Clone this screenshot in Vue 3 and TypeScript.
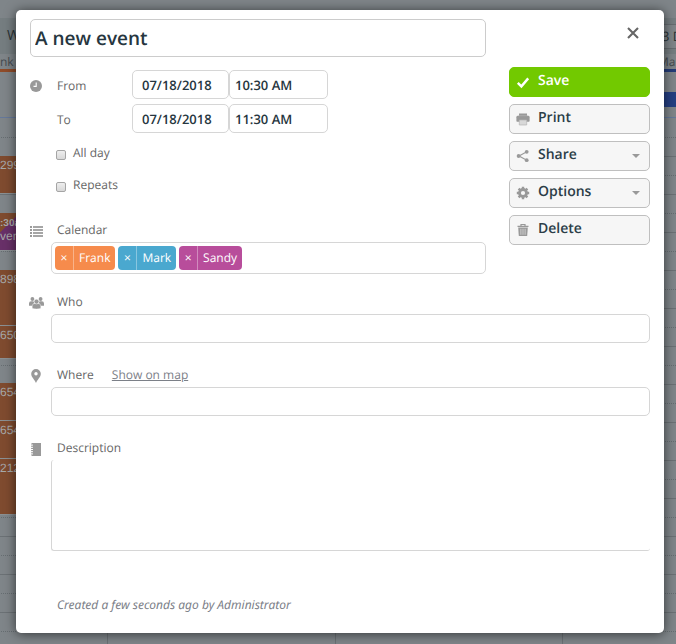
<script setup lang="ts">
import { ref } from 'vue'

interface Tag {
  name: string
  tone: string
}

const title = ref('A new event')
const from = ref({ date: '07/18/2018', time: '10:30 AM' })
const to = ref({ date: '07/18/2018', time: '11:30 AM' })
const allDay = ref(false)
const repeats = ref(false)
const tags = ref<Tag[]>([
  { name: 'Frank', tone: 'orange' },
  { name: 'Mark', tone: 'blue' },
  { name: 'Sandy', tone: 'purple' },
])
const calendarQuery = ref('')
const who = ref('')
const where = ref('')
const description = ref('')

function removeTag(name: string) {
  tags.value = tags.value.filter((tag) => tag.name !== name)
}
</script>

<template>
  <div class="page">
    <div class="calendar" aria-hidden="true">
      <div class="cal-top"></div>
      <div class="cal-toolbar">
        <span class="cal-view">W</span>
        <span class="cal-range">3 D</span>
      </div>
      <div class="cal-names">
        <span>nk</span>
        <span class="name-end">Mar</span>
      </div>
      <div class="cal-bars"><i></i><i class="bar-end"></i></div>
      <div class="cal-allday"><i></i></div>
      <div class="cal-grid">
        <div class="day">
          <div class="slot free"></div>
          <div class="slot event">299</div>
          <div class="slot gap"></div>
          <div class="slot mixed"><b>:30a</b><br />vent</div>
          <div class="slot gap"></div>
          <div class="slot event tall">898</div>
          <div class="slot event short">650</div>
          <div class="slot gap wide"></div>
          <div class="slot event">654</div>
          <div class="slot event">654</div>
          <div class="slot event tall">212</div>
        </div>
        <div class="day"></div>
        <div class="day"></div>
        <div class="day last"></div>
      </div>
    </div>

    <form class="dialog" role="dialog" aria-label="Event" @submit.prevent>
      <div class="upper">
        <div class="main">
          <input v-model="title" class="box title" type="text" aria-label="Title" />

          <div class="times">
            <svg class="icon clock" viewBox="0 0 12 12">
              <circle cx="6" cy="6" r="6" fill="#999" />
              <path d="M6.2 2.5V6.4H3.5" fill="none" stroke="#fff" stroke-width="1.1" />
            </svg>
            <label for="from-date">From</label>
            <div class="pair">
              <input id="from-date" v-model="from.date" class="box date" type="text" />
              <input v-model="from.time" class="box time" type="text" aria-label="From time" />
            </div>
            <label class="second" for="to-date">To</label>
            <div class="pair">
              <input id="to-date" v-model="to.date" class="box date" type="text" />
              <input v-model="to.time" class="box time" type="text" aria-label="To time" />
            </div>
          </div>

          <div class="checks">
            <label><input v-model="allDay" type="checkbox" />All day</label>
            <label><input v-model="repeats" type="checkbox" />Repeats</label>
          </div>

          <section class="field">
            <svg class="icon list" viewBox="0 0 14 11">
              <path d="M1 0h2v2H1zM1 3h2v2H1zM1 6h2v2H1zM1 9h2v2H1z" fill="#999" />
              <path d="M4 0H14v2H4zM4 3H14v2H4zM4 6H14v2H4zM4 9H14v2H4z" fill="#a6a6a6" />
            </svg>
            <div class="label-row"><label for="calendar">Calendar</label></div>
            <div class="box tags">
              <span v-for="tag in tags" :key="tag.name" class="tag" :class="tag.tone">
                <button type="button" :aria-label="`Remove ${tag.name}`" @click="removeTag(tag.name)">×</button>
                <span>{{ tag.name }}</span>
              </span>
              <input id="calendar" v-model="calendarQuery" type="text" />
            </div>
          </section>
        </div>

        <div class="side">
          <button class="close" type="button" aria-label="Close">
            <svg viewBox="0 0 12 12"><path d="M1 1l10 10M11 1L1 11" stroke="#666" stroke-width="2.1" /></svg>
          </button>
          <div class="actions">
            <button class="action save" type="submit">
              <svg viewBox="0 0 14 14"><path d="M1.8 7.8l3.6 3.6 6.8-8" fill="none" stroke="#fff" stroke-width="2.4" /></svg>
              <span>Save</span>
            </button>
            <button class="action" type="button">
              <svg viewBox="0 0 14 14">
                <path d="M3 1.5h8V4H3z" fill="#999" />
                <path d="M1.8 3.8h10.4Q13.6 3.8 13.6 5.2V9q0 .8-.8.8H1.2Q.4 9.8.4 9V5.2Q.4 3.8 1.8 3.800z" fill="#999" />
                <path d="M3.3 8h7.4v5H3.300z" fill="#d8d8d8" stroke="#b5b5b5" stroke-width=".7" />
                <path d="M2.5 3.700h9" stroke="#bbb" stroke-width=".6" />
              </svg>
              <span>Print</span>
            </button>
            <button class="action" type="button">
              <svg viewBox="0 0 14 14">
                <path d="M10.8 2.8L3 7l7.800 4.200" fill="none" stroke="#999" stroke-width="1.1" />
                <circle cx="10.7" cy="2.8" r="1.9" fill="#999" />
                <circle cx="2.6" cy="7" r="1.9" fill="#999" />
                <circle cx="10.7" cy="11.2" r="1.9" fill="#999" />
              </svg>
              <span>Share</span>
              <i class="caret"></i>
            </button>
            <button class="action" type="button">
              <svg viewBox="0 0 14 14">
                <circle cx="7" cy="7" r="3.5" fill="none" stroke="#999" stroke-width="2.8" />
                <path
                  d="M7 .8v2.4M7 10.8v2.4M.8 7h2.4M10.8 7h2.4M2.6 2.6l1.8 1.8M9.6 9.6l1.8 1.8M2.6 11.4l1.8-1.8M9.6 4.4l1.8-1.8"
                  stroke="#999"
                  stroke-width="2.4"
                />
              </svg>
              <span>Options</span>
              <i class="caret"></i>
            </button>
            <button class="action" type="button">
              <svg viewBox="0 0 14 14">
                <path d="M5 2.8V1.500h4v1.300M1.500 3.300h11" fill="none" stroke="#999" stroke-width="1.2" />
                <path d="M2.2 4.600h9.600L11.200 13H2.800z" fill="#999" />
                <path d="M4.9 5.800v6M7 5.800v6M9.100 5.800v6" stroke="#ddd" stroke-width=".8" />
              </svg>
              <span>Delete</span>
            </button>
          </div>
        </div>
      </div>

      <section class="field">
        <svg class="icon people" viewBox="0 0 15 12">
          <g fill="#999">
            <circle cx="3.4" cy="2" r="1.9" />
            <circle cx="11.6" cy="2" r="1.9" />
            <path d="M0 8.800V6.500Q0 4.300 2.200 4.300h2.300L5.200 5.500 3.600 8.800zM15 8.800V6.500Q15 4.300 12.800 4.300h-2.300L9.800 5.500l1.600 3.300z" />
          </g>
          <g fill="#999" stroke="#fff" stroke-width=".4">
            <path d="M3.200 11.200V9q0-2.500 2.500-2.500h3.600q2.500 0 2.500 2.500v2.200q-1.200.8-4.300.8t-4.300-.8z" />
            <circle cx="7.5" cy="4.6" r="2.4" />
          </g>
        </svg>
        <div class="label-row"><label for="who">Who</label></div>
        <input id="who" v-model="who" class="box line" type="text" />
      </section>

      <section class="field">
        <svg class="icon pin" viewBox="0 0 10 14">
          <path d="M5 0a4.800 4.800 0 0 0-4.800 4.800C.2 8.200 3.600 10.500 5 14c1.400-3.500 4.800-5.800 4.800-9.200A4.800 4.800 0 0 0 5 0z" fill="#999" />
          <circle cx="5" cy="4.8" r="1.7" fill="#fff" />
        </svg>
        <div class="label-row">
          <label for="where">Where</label>
          <a href="#map">Show on map</a>
        </div>
        <input id="where" v-model="where" class="box line" type="text" />
      </section>

      <section class="field">
        <svg class="icon note" viewBox="0 0 10 13">
          <path d="M1 0h9v13H1z" fill="#999" />
          <path d="M0 1h2M0 3.2h2M0 5.400h2M0 7.600h2M0 9.800h2M0 12h2" stroke="#999" />
          <path d="M1 2.1h1M1 4.300h1M1 6.500h1M1 8.700h1M1 10.900h1" stroke="#fff" />
        </svg>
        <div class="label-row"><label for="description">Description</label></div>
        <textarea id="description" v-model="description"></textarea>
      </section>

      <p class="created">Created a few seconds ago by Administrator</p>
    </form>
  </div>
</template>

<style>
body {
  background: #7f8589;
}
</style>

<style scoped>
* {
  box-sizing: border-box;
}

.page {
  position: relative;
  overflow: hidden;
  min-height: 100vh;
  padding: 10px 12px 11px 16px;
  font: 12px/20px 'Open Sans', sans-serif;
  text-rendering: geometricPrecision;
  color: #666;
}

button,
input,
textarea {
  margin: 0;
  padding: 0;
  font: inherit;
  text-rendering: inherit;
  color: inherit;
}

/* dimmed calendar below the dialog */
.calendar {
  position: absolute;
  inset: 0;
  display: flex;
  flex-direction: column;
  overflow: hidden;
  background: #7f8589;
  color: #454b4f;
}

.cal-top {
  height: 18px;
}

.cal-toolbar {
  display: flex;
  justify-content: space-between;
  height: 36px;
  padding-left: 7px;
  background: #757d80;
  font-size: 14px;
  line-height: 36px;
  color: #2b3336;
}

.cal-range {
  align-self: center;
  width: 30px;
  height: 25px;
  padding-left: 16px;
  border: solid #666c70;
  border-width: 1px 0;
  background: #7f8589;
  font-size: 13px;
  line-height: 23px;
  white-space: nowrap;
}

.cal-names {
  display: flex;
  justify-content: space-between;
  height: 15px;
  line-height: 15px;
}

.name-end {
  width: 18px;
}

.cal-bars {
  display: flex;
  height: 3px;
  background: #8f4c2a;
}

.bar-end {
  flex: 0 0 112px;
  margin-left: auto;
  background: #243c78;
}

.cal-allday {
  display: flex;
  justify-content: flex-end;
  align-items: flex-start;
  height: 46px;
  padding-top: 20px;
  margin-bottom: 1px;
  border-bottom: 1px solid #65789a;
}

.cal-allday i {
  width: 112px;
  height: 15px;
  background: #243f82;
}

.cal-grid {
  flex: 1;
  display: grid;
  grid-template-columns: 108px 1fr 1fr 113px;
  background:
    repeating-linear-gradient(transparent 0 37px, #6b7175 37px 38px),
    repeating-linear-gradient(90deg, #7f8589 0 1px, transparent 1px 2px),
    repeating-linear-gradient(transparent 0 18px, #666d71 18px 19px, transparent 19px 38px);
}

.day {
  border-right: 1px solid #6b7175;
}

.last {
  border-right: 0;
}

.slot {
  height: 38px;
  font: 12px/18px 'Liberation Sans', sans-serif;
  color: #a7a9a9;
}

.free {
  height: 37px;
}

.event,
.mixed {
  border-bottom: 1px solid #8b9093;
  background: #7f4b2f;
}

.event.tall {
  height: 56px;
}

.event.short {
  height: 33px;
}

.gap {
  height: 19px;
}

.gap.wide {
  height: 24px;
}

.mixed {
  padding-top: 3px;
  background: linear-gradient(135deg, #7f4b2f 14px, #683068 14px);
  line-height: 12px;
}

.mixed b {
  font-size: 10px;
}

/* dialog */
.dialog {
  position: relative;
  padding: 9px 14px 18px;
  border-radius: 5px;
  background: #fff;
  box-shadow: 0 1px 12px rgba(0, 0, 0, 0.6);
}

.upper {
  display: grid;
  grid-template-columns: minmax(0, 1fr) 141px;
  column-gap: 23px;
  margin-bottom: 18px;
}

.box {
  border: 1px solid #d6d6d6;
  border-radius: 5px;
  background: #fff;
}

.title {
  display: block;
  width: 100%;
  height: 38px;
  padding: 0 4px;
  border-color: #ccc;
  font-size: 19px;
  font-weight: 600;
  color: #263640;
}

.times {
  display: grid;
  grid-template-columns: 27px 75px auto;
  row-gap: 5px;
  align-items: center;
  margin-top: 13px;
}

.times label {
  padding-top: 2px;
}

.second {
  grid-column: 2;
}

.pair {
  display: flex;
}

.pair .box {
  height: 29px;
  font-size: 13px;
  font-weight: 600;
  color: #263640;
}

.pair .date {
  width: 97px;
  padding-left: 9px;
}

.pair .time {
  width: 99px;
  padding-left: 5px;
}

.checks {
  display: grid;
  gap: 12px;
  justify-items: start;
  margin: 10px 0 25px 26px;
}

.checks label {
  display: flex;
  align-items: center;
  gap: 7px;
}

.checks input {
  appearance: none;
  width: 10px;
  height: 10px;
  margin-top: 4px;
  border: 1px solid #a5a5a5;
  border-radius: 2px;
  background: linear-gradient(#eee, #d8d8d8);
}

.checks input:checked {
  background: #777;
}

.field {
  display: grid;
  grid-template-columns: 21px minmax(0, 1fr);
  row-gap: 2px;
  margin-bottom: 22px;
}

.upper .field {
  margin-bottom: 0;
}

.field > :last-child {
  grid-column: 2;
}

.icon {
  display: block;
  align-self: center;
  width: 14px;
  margin: 2px 0 0 -1px;
}

.clock {
  height: 12px;
}

.list {
  height: 11px;
}

.people {
  width: 15px;
  height: 12px;
}

.pin {
  height: 14px;
}

.note {
  height: 13px;
}

.label-row {
  display: flex;
  gap: 18px;
  padding-left: 6px;
}

.label-row a {
  color: #7c8088;
}

.tags {
  display: flex;
  align-items: center;
  gap: 3px;
  height: 32px;
  padding: 0 3px;
}

.tags > input {
  flex: 1;
  min-width: 0;
  border: 0;
  outline: 0;
}

.tag {
  display: flex;
  align-items: center;
  height: 24px;
  padding-right: 5px;
  border-radius: 4px;
  color: #fff;
}

.tag button {
  width: 19px;
  height: 24px;
  margin-right: 5px;
  border: 0;
  border-right: 1px solid rgba(255, 255, 255, 0.35);
  background: none;
}

.orange {
  background: #f68b4c;
}

.blue {
  background: #4aa8cf;
}

.purple {
  background: #b84d9b;
}

.line {
  width: 100%;
  height: 29px;
  padding: 0 6px;
}

textarea {
  display: block;
  width: 100%;
  height: 91px;
  padding: 6px;
  border: solid #d6d6d6;
  border-width: 0 0 1px 1px;
  border-radius: 3px;
  background: #fff;
  resize: none;
}

.created {
  margin: 44px 0 0 27px;
  font-family: 'Noto Sans', 'Open Sans', sans-serif;
  font-style: italic;
  color: #7c8088;
}

.side {
  display: flex;
  flex-direction: column;
}

.close {
  align-self: flex-end;
  width: 24px;
  height: 24px;
  margin: 2px 5px 22px 0;
  padding: 6px;
  border: 0;
  background: none;
}

.close svg {
  display: block;
  width: 12px;
  height: 12px;
}

.actions {
  display: grid;
  gap: 7px;
}

.action {
  display: flex;
  align-items: center;
  gap: 8px;
  height: 30px;
  padding: 0 9px 0 6px;
  border: 1px solid #bfbfbf;
  border-radius: 5px;
  background: #f6f6f6;
  font-size: 14px;
  font-weight: 600;
  color: #2c3e48;
}

.action svg {
  width: 14px;
  height: 14px;
}

.action span {
  padding-bottom: 2px;
}

.save {
  border-color: #72c900;
  background: #72c900;
  color: #fff;
}

.caret {
  margin-left: auto;
  border: solid transparent;
  border-width: 4px 4px 0;
  border-top-color: #999;
}
</style>
